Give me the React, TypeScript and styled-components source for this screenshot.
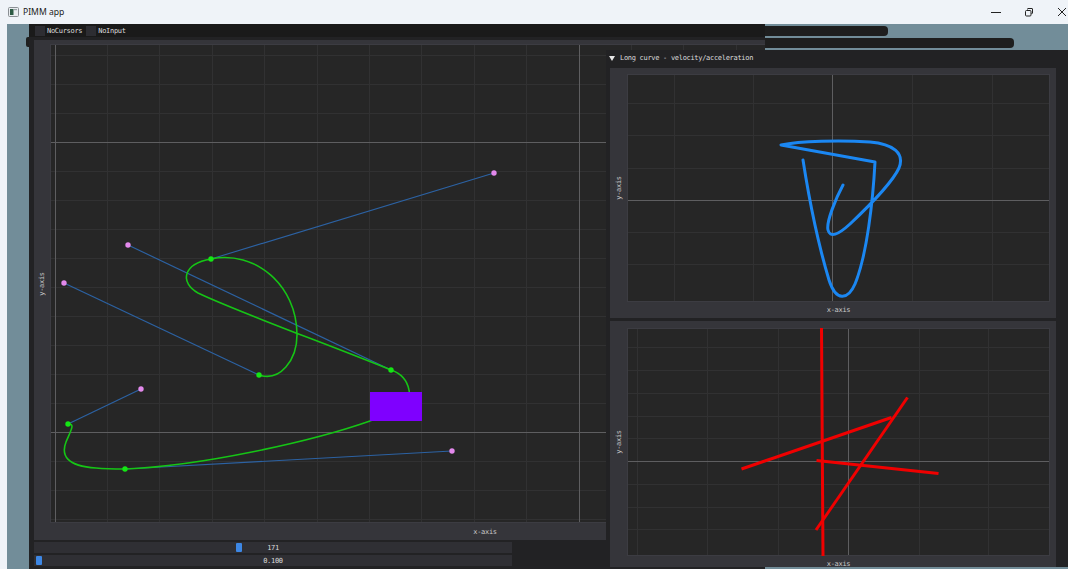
import React from "react";
import styled, { createGlobalStyle } from "styled-components";

const GlobalStyle = createGlobalStyle`
  html, body { margin: 0; padding: 0; background: #eff3f8; overflow: hidden; }
  #root { width: 1068px; height: 569px; }
`;

const MONO = `"DejaVu Sans Mono", "Liberation Mono", monospace`;

/* ---------- OS window chrome ---------- */

const AppFrame = styled.div`
  width: 1068px;
  height: 569px;
  display: flex;
  flex-direction: column;
  overflow: hidden;
`;

const TitleBar = styled.header`
  height: 24px;
  flex: none;
  display: flex;
  align-items: center;
  padding-left: 8px;
  background: #eff3f8;
  font-family: "Noto Sans", "Open Sans", sans-serif;
  font-size: 8.6px;
  color: #1b1b1b;
`;

const AppTitle = styled.span`
  margin-left: 4px;
`;

const Controls = styled.div`
  margin-left: auto;
  display: flex;
  align-items: center;
  gap: 23px;
  padding-right: 1px;
`;

const ControlButton = styled.span`
  width: 10px;
  height: 10px;
  display: flex;
  align-items: center;
  justify-content: center;
`;

const Client = styled.div`
  flex: 1;
  min-height: 0;
  display: flex;
`;

const Edge = styled.div`
  width: 7px;
  flex: none;
  background: #eff3f8;
`;

const Desktop = styled.main`
  flex: 1;
  position: relative;
  background: #728d99;
  overflow: hidden;
  font-family: ${MONO};
  font-size: 7px;
  letter-spacing: -0.3px;
  color: #dcdcdc;
  -webkit-font-smoothing: antialiased;
  transform: translateZ(0);
`;

/* ---------- ImGui windows on the desktop ---------- */

const CollapsedWindow = styled.div<{ $top: number; $width: number }>`
  position: absolute;
  left: 693px;
  top: ${(p) => p.$top}px;
  width: ${(p) => p.$width}px;
  height: 10px;
  background: #1e1e1e;
  border-radius: 0 4px 4px 0;
`;

const Grip = styled.div`
  position: absolute;
  left: 19px;
  top: 13px;
  width: 4px;
  height: 10px;
  background: #1f1f1f;
  border-radius: 2px 0 0 2px;
`;

const MainWindow = styled.section`
  position: absolute;
  left: 22px;
  top: 0;
  bottom: 0;
  width: 736px;
  background: #222224;
  overflow: hidden;
  display: flex;
  flex-direction: column;
`;

const Toolbar = styled.div`
  height: 13px;
  flex: none;
  display: flex;
  align-items: center;
  gap: 4px;
  padding-left: 6px;
  background: #1a1a1a;
`;

const CheckItem = styled.label`
  display: flex;
  align-items: center;
  gap: 2px;
  white-space: nowrap;
`;

const CheckBox = styled.span`
  width: 10px;
  height: 10px;
  background: #2d2d32;
`;

const MainBody = styled.div`
  display: flex;
  flex-direction: column;
  gap: 2px;
  padding: 3px 0 0 5px;
`;

const PlotFrame = styled.div<{
  $width: number;
  $height: number;
  $padTop: number;
  $axisW: number;
  $axisH: number;
}>`
  flex: none;
  box-sizing: border-box;
  width: ${(p) => p.$width}px;
  height: ${(p) => p.$height}px;
  padding: ${(p) => p.$padTop}px 6px 0 0;
  background: #35353a;
  display: grid;
  grid-template-columns: ${(p) => p.$axisW}px 1fr;
  grid-template-rows: 1fr ${(p) => p.$axisH}px;
`;

const YLabel = styled.div`
  grid-row: 1;
  grid-column: 1;
  display: flex;
  align-items: center;
  justify-content: center;
  color: #c8c8c8;

  span {
    transform: rotate(-90deg);
    white-space: nowrap;
  }
`;

const XLabel = styled.div`
  grid-row: 2;
  grid-column: 2;
  display: flex;
  align-items: center;
  justify-content: center;
  color: #c8c8c8;
`;

const PlotArea = styled.div`
  grid-row: 1;
  grid-column: 2;
  min-width: 0;
  min-height: 0;

  svg {
    display: block;
    width: 100%;
    height: 100%;
  }
`;

const SliderTrack = styled.div`
  position: relative;
  width: 478px;
  height: 11px;
  background: #2f2f34;
  display: flex;
  align-items: center;
  justify-content: center;
`;

const SliderGrab = styled.span`
  position: absolute;
  top: 1px;
  width: 6px;
  height: 9px;
  background: #3d87e4;
  border-radius: 1px;
`;

const SideWindow = styled.section`
  position: absolute;
  left: 599px;
  top: 26px;
  width: 462px;
  height: 517px;
  box-sizing: border-box;
  padding: 0 12px 0 4px;
  background: #222224;
  overflow: hidden;
  display: flex;
  flex-direction: column;
`;

const TreeHeader = styled.div`
  height: 16px;
  flex: none;
  display: flex;
  align-items: center;
  gap: 5px;
  margin-left: -1px;
  margin-bottom: 2px;
  white-space: nowrap;
`;

const PlotStack = styled.div`
  display: flex;
  flex-direction: column;
  gap: 3px;
`;

/* ---------- chart drawing ---------- */

type GridSpec = {
  x0: number;
  y0: number;
  w: number;
  h: number;
  xs: number[];
  ys: number[];
  brightX: number[];
  brightY: number[];
};

const GridLines: React.FC<GridSpec> = ({ x0, y0, w, h, xs, ys, brightX, brightY }) => (
  <g shapeRendering="crispEdges">
    <rect x={x0} y={y0} width={w} height={h} fill="#262626" />
    {xs.map((x) => (
      <line key={"gx" + x} x1={x} x2={x} y1={y0} y2={y0 + h} stroke="#313132" strokeWidth={1} />
    ))}
    {ys.map((y) => (
      <line key={"gy" + y} x1={x0} x2={x0 + w} y1={y} y2={y} stroke="#313132" strokeWidth={1} />
    ))}
    {brightX.map((x) => (
      <line key={"bx" + x} x1={x} x2={x} y1={y0} y2={y0 + h} stroke="#5e5e60" strokeWidth={1} />
    ))}
    {brightY.map((y) => (
      <line key={"by" + y} x1={x0} x2={x0 + w} y1={y} y2={y} stroke="#5e5e60" strokeWidth={1} />
    ))}
    <rect x={x0 + 0.5} y={y0 + 0.5} width={w - 1} height={h - 1} fill="none" stroke="#3c3c42" strokeWidth={1} />
  </g>
);

const range = (start: number, step: number, end: number) => {
  const out: number[] = [];
  for (let v = start; v < end; v += step) out.push(Math.round(v * 10) / 10);
  return out;
};

type Pt = [number, number];

const handles: [Pt, Pt][] = [
  [[211, 259], [494, 173]],
  [[391, 370], [128, 245]],
  [[259, 375], [64, 283]],
  [[68, 424], [141, 389]],
  [[125, 469], [452, 451]],
];

const anchors: Pt[] = [[211, 259], [259, 375], [391, 370], [68, 424], [125, 469]];
const controls: Pt[] = [[494, 173], [128, 245], [64, 283], [141, 389], [452, 451]];

const BEZIER_PATH =
  "M 68 424 C 76 423, 70 432, 66 442 C 61 455, 66 466, 96 468 C 106 469, 116 469, 125 469 " +
  "C 200 466, 310 442, 370 421 C 395 412, 412 402, 409 390 C 407 380, 400 373, 391 370 " +
  "C 330 345, 240 313, 198 293 C 180 283, 182 264, 211 259 " +
  "C 255 250, 297 285, 297 335 C 297 360, 280 382, 259 375";

const BezierPlot: React.FC = () => (
  <svg viewBox="50 44 870 479" preserveAspectRatio="none">
    <GridLines
      x0={50}
      y0={44}
      w={870}
      h={479}
      xs={range(55, 52.4, 920)}
      ys={range(55, 29, 523)}
      brightX={[55, 579]}
      brightY={[142, 432]}
    />
    {handles.map(([a, b], i) => (
      <line key={i} x1={a[0]} y1={a[1]} x2={b[0]} y2={b[1]} stroke="#2c62a3" strokeWidth={1.2} />
    ))}
    <path d={BEZIER_PATH} fill="none" stroke="#16c416" strokeWidth={1.6} strokeLinejoin="round" />
    <rect x={370} y={392} width={52} height={29} fill="#7f00ff" />
    {controls.map(([x, y], i) => (
      <circle key={"c" + i} cx={x} cy={y} r={2.7} fill="#e389ec" />
    ))}
    {anchors.map(([x, y], i) => (
      <circle key={"a" + i} cx={x} cy={y} r={2.7} fill="#14e614" />
    ))}
  </svg>
);

const VELOCITY_PATH =
  "M 843 185 C 836 198, 826 222, 828 230 C 830 238, 838 235, 850 224 " +
  "C 868 207, 892 183, 899 168 C 905 153, 893 144, 870 142 C 840 140, 800 141, 781 145 " +
  "L 875 162 C 873 200, 867 255, 855 284 C 848 300, 836 302, 829 280 C 820 250, 810 205, 803 160";

const VelocityPlot: React.FC = () => (
  <svg viewBox="627 74 423 228" preserveAspectRatio="none">
    <GridLines
      x0={627}
      y0={74}
      w={423}
      h={228}
      xs={[674, 753.5, 912.5, 992]}
      ys={[103.5, 135.5, 168, 232.5, 264.5]}
      brightX={[832.5]}
      brightY={[200.5]}
    />
    <path
      d={VELOCITY_PATH}
      fill="none"
      stroke="#1b87f2"
      strokeWidth={3}
      strokeLinejoin="round"
      strokeLinecap="round"
    />
  </svg>
);

const accelSegments: [Pt, Pt][] = [
  [[821.5, 328], [823, 556]],
  [[741.5, 469], [891.5, 417.5]],
  [[907.5, 397.5], [816, 530]],
  [[816.5, 460.5], [938.5, 473.5]],
];

const AccelerationPlot: React.FC = () => (
  <svg viewBox="627 328 423 228" preserveAspectRatio="none">
    <GridLines
      x0={627}
      y0={328}
      w={423}
      h={228}
      xs={[637, 707, 778, 919, 988]}
      ys={[347, 370, 393, 416, 438.5, 484, 507, 529.5]}
      brightX={[848]}
      brightY={[461]}
    />
    {accelSegments.map(([a, b], i) => (
      <line key={i} x1={a[0]} y1={a[1]} x2={b[0]} y2={b[1]} stroke="#f00000" strokeWidth={3} />
    ))}
  </svg>
);

/* ---------- widgets ---------- */

const Slider: React.FC<{ value: number; min: number; max: number; text: string }> = ({
  value,
  min,
  max,
  text,
}) => {
  const left = 2 + ((value - min) / (max - min)) * (478 - 10);
  return (
    <SliderTrack>
      <SliderGrab style={{ left: `${left}px` }} />
      <span>{text}</span>
    </SliderTrack>
  );
};

const AppIcon = () => (
  <svg width="11" height="10" viewBox="0 0 11 10">
    <rect x="0.5" y="0.5" width="10" height="9" rx="1" fill="#e8ecef" stroke="#8a8f94" />
    <rect x="2" y="2" width="3.5" height="6" fill="#2c5a44" />
    <rect x="6" y="2" width="3" height="1.2" fill="#9aa2a8" />
  </svg>
);

const MinimizeIcon = () => (
  <svg width="10" height="10" viewBox="0 0 10 10">
    <line x1="0" y1="5.5" x2="10" y2="5.5" stroke="#222" strokeWidth="1" />
  </svg>
);

const RestoreIcon = () => (
  <svg width="10" height="10" viewBox="0 0 10 10">
    <rect x="1.5" y="3.5" width="5.5" height="5.5" rx="1" fill="none" stroke="#222" />
    <path d="M 3.5 2.5 V 2 Q 3.5 1.5 4 1.5 H 8 Q 8.5 1.5 8.5 2 V 6 Q 8.5 6.5 8 6.5 H 7.5" fill="none" stroke="#222" />
  </svg>
);

const CloseIcon = () => (
  <svg width="10" height="10" viewBox="0 0 10 10">
    <path d="M 1 1 L 9 9 M 9 1 L 1 9" stroke="#222" strokeWidth="1" />
  </svg>
);

const Caret = () => (
  <svg width="6" height="5" viewBox="0 0 6 5">
    <polygon points="0,0 6,0 3,5" fill="#e6e6e6" />
  </svg>
);

export default function App() {
  return (
    <>
      <GlobalStyle />
      <AppFrame>
        <TitleBar>
          <AppIcon />
          <AppTitle>PIMM app</AppTitle>
          <Controls>
            <ControlButton>
              <MinimizeIcon />
            </ControlButton>
            <ControlButton>
              <RestoreIcon />
            </ControlButton>
            <ControlButton>
              <CloseIcon />
            </ControlButton>
          </Controls>
        </TitleBar>
        <Client>
          <Edge />
          <Desktop>
            <CollapsedWindow $top={2} $width={188} />
            <CollapsedWindow $top={14} $width={314} />
            <Grip />
            <MainWindow>
              <Toolbar>
                <CheckItem>
                  <CheckBox />
                  NoCursors
                </CheckItem>
                <CheckItem>
                  <CheckBox />
                  NoInput
                </CheckItem>
              </Toolbar>
              <MainBody>
                <PlotFrame $width={892} $height={500} $padTop={4} $axisW={16} $axisH={17}>
                  <YLabel>
                    <span>y-axis</span>
                  </YLabel>
                  <PlotArea>
                    <BezierPlot />
                  </PlotArea>
                  <XLabel>x-axis</XLabel>
                </PlotFrame>
                <Slider value={171} min={0} max={400} text="171" />
                <Slider value={0.1} min={0.1} max={10} text="0.100" />
              </MainBody>
            </MainWindow>
            <SideWindow>
              <TreeHeader>
                <Caret />
                Long curve - velocity/acceleration
              </TreeHeader>
              <PlotStack>
                <PlotFrame $width={446} $height={250} $padTop={6} $axisW={17} $axisH={16}>
                  <YLabel>
                    <span>y-axis</span>
                  </YLabel>
                  <PlotArea>
                    <VelocityPlot />
                  </PlotArea>
                  <XLabel>x-axis</XLabel>
                </PlotFrame>
                <PlotFrame $width={446} $height={251} $padTop={7} $axisW={17} $axisH={16}>
                  <YLabel>
                    <span>y-axis</span>
                  </YLabel>
                  <PlotArea>
                    <AccelerationPlot />
                  </PlotArea>
                  <XLabel>x-axis</XLabel>
                </PlotFrame>
              </PlotStack>
            </SideWindow>
          </Desktop>
        </Client>
      </AppFrame>
    </>
  );
}
